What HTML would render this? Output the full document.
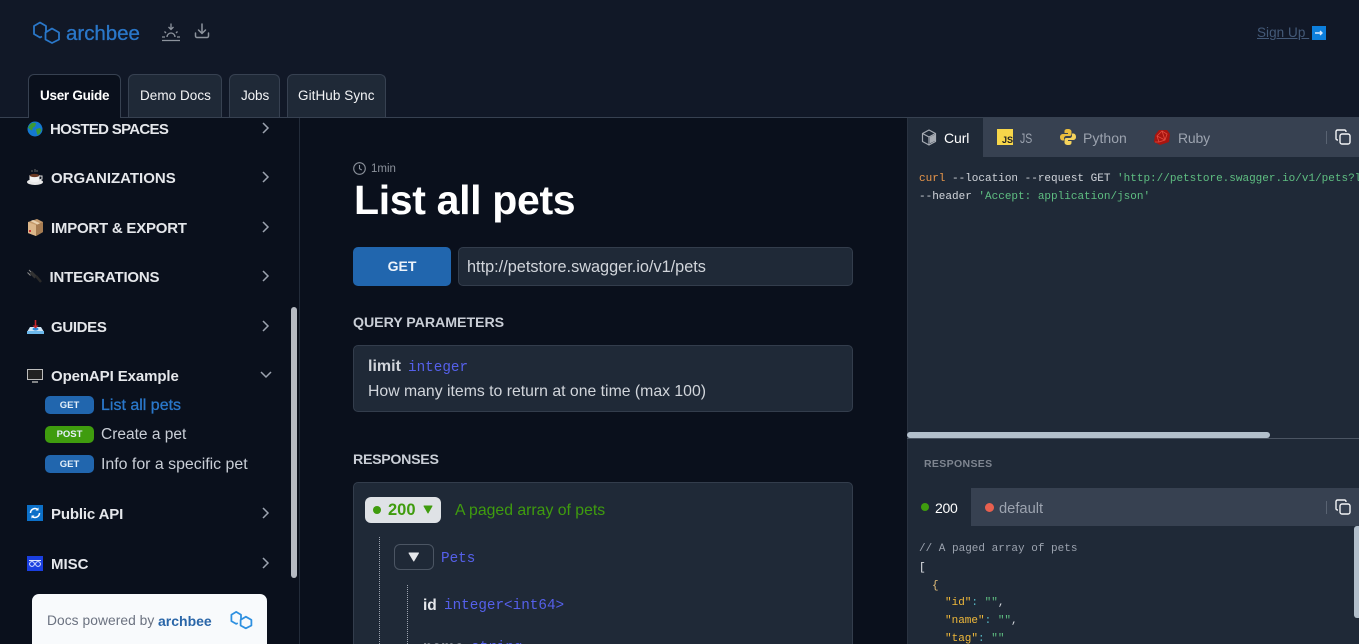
<!DOCTYPE html>
<html><head><meta charset="utf-8"><title>List all pets</title>
<style>
html,body{margin:0;padding:0;width:1359px;height:644px;overflow:hidden;background:#0a101c;font-family:"Liberation Sans",sans-serif}
#r{position:relative;width:1359px;height:644px;overflow:hidden}
.b{position:absolute;box-sizing:border-box}
.t{position:absolute;white-space:pre;line-height:20px}
.m{font-family:"Liberation Mono",monospace}
svg{position:absolute;overflow:visible}
.nav{font-size:15px;font-weight:bold;color:#e5e7eb}
.tab{position:absolute;top:74px;height:44px;box-sizing:border-box;background:#1f2937;border:1px solid #374151;border-bottom:none;border-radius:6px 6px 0 0}
.tt{font-size:13.5px;color:#f3f4f6;top:86px}
.pill{position:absolute;left:45px;width:49px;height:18px;border-radius:5px;background:#2166ae;color:#e5f0fa;font-size:9.5px;font-weight:bold;text-align:center;line-height:19px}
.c{font-size:11px;line-height:18px;color:#d1d5db}
</style></head><body><div id="r">
<div class="b" style="left:0;top:0;width:1359px;height:118px;background:#111827"></div>

<svg style="left:30px;top:18px" width="32" height="28" viewBox="30 18 32 28" fill="none" stroke="#2a77c9" stroke-width="1.800" stroke-linejoin="round"><path d="M42 36.500L40 37.500L34 34V26L40 22.500L46 26V32"/><path d="M52 28.500L59 32.500V39.500L52 43L45.500 39.500V32.500Z"/></svg>
<div class="t" style="left:66px;top:24px;font-size:20.500px;color:#2a77c9;letter-spacing:-.02px;-webkit-text-stroke:.3px #2a77c9">archbee</div>
<svg style="left:161px;top:22px" width="20" height="20" viewBox="0 0 20 20" fill="none" stroke="#8d939d" stroke-width="1.300"><path d="M10 1.500v6M7.500 5l2.500 2.500L12.500 5M1 18.500h18M1 15h3M16 15h3M6 15a4 4 0 0 1 8 0M3.500 9.500l1.500 1.500M16.500 9.500L15 11"/></svg>
<svg style="left:194px;top:23px" width="16" height="16" viewBox="0 0 16 16" fill="none" stroke="#8d939d" stroke-width="1.500" stroke-linecap="round" stroke-linejoin="round"><path d="M8 1v9M4.500 7L8 10.500 11.500 7M1.500 10v3a1.500 1.500 0 0 0 1.500 1.500h10a1.500 1.500 0 0 0 1.500-1.500v-3"/></svg>

<div class="t" style="left:1257px;top:23px;font-size:13.500px;color:#445a78;text-decoration:underline;letter-spacing:.05px">Sign Up </div>
<div class="b" style="left:1312px;top:26px;width:14px;height:14px;background:#0d7fdc;border:0"></div>
<svg style="left:1314px;top:29px" width="10" height="8"><path d="M1 4h7M6 2l2 2-2 2" stroke="#dbeafe" stroke-width="1.400" fill="none"/></svg>

<div class="tab" style="left:28px;width:93px;background:#0a101c"></div>
<div class="tab" style="left:128px;width:94px"></div>
<div class="tab" style="left:229px;width:51px"></div>
<div class="tab" style="left:287px;width:99px"></div>
<div class="t tt" style="left:40px;font-weight:bold;color:#fff;letter-spacing:-.28px">User Guide</div>
<div class="t tt" style="left:140px;letter-spacing:.05px">Demo Docs</div>
<div class="t tt" style="left:241px;letter-spacing:-.1px">Jobs</div>
<div class="t tt" style="left:298px;letter-spacing:.07px">GitHub Sync</div>
<div class="b" style="left:0;top:117px;width:28px;height:1px;background:#374151"></div>
<div class="b" style="left:120px;top:117px;width:1239px;height:1px;background:#374151"></div>

<div class="b" style="left:299px;top:118px;width:1px;height:526px;background:#232c3a"></div>

<svg style="left:27px;top:121px" width="16" height="16" viewBox="0 0 16 16"><circle cx="8" cy="8" r="7.500" fill="#1478d0"/><path d="M4 2.500c2-1 4-1 5 0l-1 3-2 1-1 3-2-1-2-2zM9 8l4-1 1.500 2-2 4-2 1-1-3z" fill="#3d9a34"/></svg>
<div class="t nav" style="left:50px;top:120px;letter-spacing:-.7px">HOSTED SPACES</div>

<svg style="left:27px;top:169px" width="16" height="16" viewBox="0 0 16 16"><ellipse cx="8" cy="13" rx="8" ry="3" fill="#e8e8e8"/><path d="M2.500 6h10v4c0 2-2 3-5 3s-5-1-5-3z" fill="#f2f2f2"/><ellipse cx="7.500" cy="6.500" rx="4.800" ry="1.600" fill="#6b3a24"/><path d="M12.500 7h2.500v3l-3 1" fill="none" stroke="#ddd"/><path d="M5 3V1M8 3V0M10 3V1" stroke="#666"/></svg>
<div class="t nav" style="left:51px;top:169px">ORGANIZATIONS</div>

<svg style="left:27px;top:219px" width="17" height="17" viewBox="0 0 17 17"><path d="M1 3l9-3 6 3v10l-7 4-8-3z" fill="#c49a6c"/><path d="M1 3l8 3v11l-8-3z" fill="#dcb78a"/><path d="M9 6l7-3v10l-7 4z" fill="#a67c52"/><path d="M3.500 2l7 3.500 2.500-1.200-7-3.300z" fill="#e9d2b0"/><rect x="2" y="11" width="2" height="2" fill="#c33"/></svg>
<div class="t nav" style="left:51px;top:219px;letter-spacing:-.23px">IMPORT &amp; EXPORT</div>

<svg style="left:27px;top:269px" width="16" height="15" viewBox="0 0 16 15"><path d="M2 1l3 3M.5 3.500l3 3" stroke="#888" stroke-width="1"/><path d="M5 2l5 5-2.500 2.500-5-5z" fill="#333"/><path d="M9 7l5 6" stroke="#2a2a2a" stroke-width="2.500"/></svg>
<div class="t nav" style="left:49.500px;top:268px;letter-spacing:-.2px">INTEGRATIONS</div>

<svg style="left:27px;top:319px" width="17" height="15" viewBox="0 0 17 15"><path d="M3 8h11l3 5v2H0v-2z" fill="#cfe6f7"/><path d="M0 12h17v3H0z" fill="#6db9ec"/><ellipse cx="8.500" cy="10" rx="3" ry="1.500" fill="#2b87d8"/><path d="M8.500 1v7" stroke="#c6252b" stroke-width="1.600"/><path d="M5.500 6.500h6l-3 3z" fill="#c6252b"/></svg>
<div class="t nav" style="left:51px;top:318px;letter-spacing:-.33px">GUIDES</div>

<svg style="left:27px;top:369px" width="16" height="14" viewBox="0 0 16 14"><rect x=".5" y=".5" width="15" height="10" fill="#222" stroke="#bdbdbd"/><path d="M5 13h6" stroke="#aaa" stroke-width="1.500"/></svg>
<div class="t nav" style="left:51px;top:367px;letter-spacing:-.1px">OpenAPI Example</div>

<div class="pill" style="top:396px">GET</div>
<div class="t" style="left:101px;top:396px;font-size:16px;color:#2a77c9;-webkit-text-stroke:.3px #2a77c9">List all pets</div>
<div class="pill" style="top:426px;height:17px;background:#3f9c0e;line-height:17px">POST</div>
<div class="t" style="left:101px;top:425px;font-size:15.500px;color:#c9ced6">Create a pet</div>
<div class="pill" style="top:455px">GET</div>
<div class="t" style="left:101px;top:455px;font-size:15.900px;color:#c9ced6">Info for a specific pet</div>

<svg style="left:27px;top:505px" width="16" height="16" viewBox="0 0 16 16"><rect width="16" height="16" fill="#0c70c8"/><path d="M3.500 8a4.500 4.500 0 0 1 7.500-3.300M12.500 8a4.500 4.500 0 0 1-7.500 3.300" fill="none" stroke="#fff" stroke-width="1.500"/><path d="M11.500 2.500v3h-3zM4.500 13.500v-3h3z" fill="#fff"/></svg>
<div class="t nav" style="left:51px;top:505px;letter-spacing:-.15px">Public API</div>
<svg style="left:27px;top:556px" width="16" height="15" viewBox="0 0 16 15"><rect width="16" height="15" fill="#1a3fe0"/><path d="M2 4.500h12" stroke="#dfe6ff" stroke-width="1"/><circle cx="5" cy="8" r="2.400" fill="none" stroke="#dfe6ff"/><circle cx="11" cy="8" r="2.400" fill="none" stroke="#dfe6ff"/></svg>
<div class="t nav" style="left:51px;top:555px">MISC</div>

<svg style="left:260px;top:121px" width="12" height="460" fill="none" stroke="#9ca3af" stroke-width="1.500" stroke-linejoin="miter"><path d="M3 2l5 5-5 5M3 51l5 5-5 5M3 101l5 5-5 5M3 150l5 5-5 5M3 200l5 5-5 5M1 251l5 5 5-5M3 387l5 5-5 5M3 437l5 5-5 5"/></svg>
<div class="b" style="left:291px;top:307px;width:6px;height:271px;background:#b5bac2;border-radius:3px"></div>

<div class="b" style="left:32px;top:594px;width:235px;height:50px;background:#f8fafc;border-radius:7px 7px 0 0"></div>
<div class="t" style="left:47px;top:611px;font-size:13.800px;color:#6b7280;letter-spacing:.05px">Docs powered by</div>
<div class="t" style="left:158px;top:611px;font-size:14px;font-weight:bold;color:#2a66a8">archbee</div>
<svg style="left:229px;top:609px" width="24" height="21" viewBox="31 19 30 26" fill="none" stroke="#2e90e0" stroke-width="2.200" stroke-linejoin="round"><path d="M42 36.500L40 37.500L34 34V26L40 22.500L46 26V32"/><path d="M52 28.500L59 32.500V39.500L52 43L45.500 39.500V32.500Z"/></svg>

<svg style="left:353px;top:162px" width="13" height="13" viewBox="0 0 13 13" fill="none" stroke="#8b919b" stroke-width="1.100"><circle cx="6.500" cy="6.500" r="5.800"/><path d="M6.500 3v3.700l2.300 1.300"/></svg>
<div class="t" style="left:371px;top:159px;font-size:11.500px;color:#8b919b">1min</div>
<div class="t" style="left:354px;top:178px;font-size:41px;line-height:44px;font-weight:bold;color:#fff;letter-spacing:-.33px">List all pets</div>

<div class="b" style="left:353px;top:247px;width:98px;height:39px;background:#2166ae;border-radius:5px"></div>
<div class="t" style="left:353px;width:98px;text-align:center;top:256px;font-size:14px;font-weight:bold;color:#edf3fa">GET</div>
<div class="b" style="left:458px;top:247px;width:395px;height:39px;background:#1f2937;border:1px solid #333d4c;border-radius:5px"></div>
<div class="t" style="left:467px;top:257px;font-size:16.300px;color:#d1d5db">http://petstore.swagger.io/v1/pets</div>

<div class="t" style="left:353px;top:313px;font-size:14.200px;font-weight:bold;color:#c9ced6;letter-spacing:-.05px">QUERY PARAMETERS</div>
<div class="b" style="left:353px;top:345px;width:500px;height:67px;background:#1f2937;border:1px solid #333d4c;border-radius:5px"></div>
<div class="t" style="left:368px;top:357px;font-size:16px;font-weight:bold;color:#d1d5db">limit</div>
<div class="t m" style="left:408px;top:358px;font-size:14.300px;color:#5560ea">integer</div>
<div class="t" style="left:368px;top:382px;font-size:15.800px;color:#d1d5db">How many items to return at one time (max 100)</div>

<div class="t" style="left:353px;top:450px;font-size:14.200px;font-weight:bold;color:#c9ced6;letter-spacing:-.3px">RESPONSES</div>
<div class="b" style="left:353px;top:482px;width:500px;height:180px;background:#1f2937;border:1px solid #333d4c;border-radius:5px"></div>
<div class="b" style="left:365px;top:497px;width:76px;height:26px;background:#dfe2e6;border-radius:6px"></div>
<div class="b" style="left:373px;top:506px;width:8px;height:8px;background:#3f9c0e;border-radius:50%"></div>
<div class="t" style="left:388px;top:500px;font-size:16.500px;font-weight:bold;color:#3f9c0e">200</div>
<svg style="left:423px;top:505px" width="10" height="9"><path d="M1 1h8l-4 7z" fill="#3f9c0e" stroke="#3f9c0e" stroke-linejoin="round"/></svg>
<div class="t" style="left:455px;top:501px;font-size:15.800px;color:#3f9c0e">A paged array of pets</div>

<div class="b" style="left:379px;top:537px;width:0;height:107px;border-left:1px dotted #9ca3af"></div>
<div class="b" style="left:394px;top:544px;width:40px;height:26px;background:#1f2937;border:1px solid #4b5563;border-radius:6px"></div>
<svg style="left:408px;top:552px" width="12" height="10"><path d="M1 1h9.500l-4.750 8z" fill="#e5e7eb" stroke="#e5e7eb" stroke-linejoin="round"/></svg>
<div class="t m" style="left:441px;top:549px;font-size:14.300px;color:#5560ea">Pets</div>
<div class="b" style="left:407px;top:585px;width:0;height:59px;border-left:1px dotted #9ca3af"></div>
<div class="t" style="left:423px;top:596px;font-size:15.500px;font-weight:bold;color:#e5e7eb">id</div>
<div class="t m" style="left:444px;top:596px;font-size:14.300px;color:#5560ea">integer&lt;int64&gt;</div>
<div class="t" style="left:423px;top:638px;font-size:15.500px;font-weight:bold;color:#e5e7eb">name</div>
<div class="t m" style="left:471px;top:638px;font-size:14.300px;color:#5560ea">string</div>

<div class="b" style="left:907px;top:118px;width:452px;height:526px;background:#1f2937"></div>
<div class="b" style="left:907px;top:118px;width:1px;height:526px;background:#2a3341"></div>
<div class="b" style="left:983px;top:118px;width:376px;height:39px;background:#374151"></div>

<svg style="left:921px;top:129px" width="16" height="17" viewBox="0 0 16 17" fill="none" stroke="#a6abb3" stroke-width="1.200" stroke-linejoin="round"><path d="M8 1l6.500 3.500v8L8 16l-6.500-3.500v-8zM1.500 4.500L8 8l6.500-3.500M8 8v8"/><path d="M9.500 8.500l4-2v5l-4 2z" fill="#a6abb3"/></svg>
<div class="t" style="left:944px;top:128px;font-size:14px;color:#fff;letter-spacing:-.1px">Curl</div>
<div class="b" style="left:997px;top:129px;width:16px;height:16px;background:#f7d64a"></div>
<div class="t" style="left:1002px;top:135px;font-size:9px;line-height:10px;font-weight:bold;color:#222">JS</div>
<div class="t" style="left:1020px;top:128px;font-size:14px;color:#9ca3af;transform:scaleX(.75);transform-origin:0 0">JS</div>
<svg style="left:1060px;top:129px" width="16" height="16" viewBox="0 0 16 16"><path d="M8 0c-3 0-3.500 1-3.500 2.500V4H8v1H3C1.500 5 0 6 0 8c0 2.500 1.500 3.500 2.500 3.500H4V9.500C4 8 5 7 6.500 7h3C11 7 11.500 6 11.500 5V2.500C11.500 1 10 0 8 0z" fill="#e9bd3e"/><path d="M8 16c3 0 3.500-1 3.500-2.500V12H8v-1h5c1.500 0 3-1 3-3 0-2.500-1.500-3.500-2.500-3.500H12v2C12 8 11 9 9.500 9h-3C5 9 4.500 10 4.500 11v2.500C4.500 15 6 16 8 16z" fill="#f5d35c"/></svg>
<div class="t" style="left:1083px;top:128px;font-size:14px;color:#9ca3af;letter-spacing:.05px">Python</div>
<svg style="left:1154px;top:130px" width="16" height="15" viewBox="0 0 16 15"><path d="M5 0h8l3 4-1 8-9 3-6-3 1-7z" fill="#a8150f"/><path d="M3 6l5-5 5 3-2 6-6 2zM8 1l3 9M3 6l8 4M1 12l4 0" stroke="#e04a3f" stroke-width=".8" fill="none"/></svg>
<div class="t" style="left:1178px;top:128px;font-size:14px;color:#9ca3af;letter-spacing:-.2px">Ruby</div>

<div class="b" style="left:1326px;top:131px;width:1px;height:13px;background:#596372"></div>
<svg style="left:1335px;top:129px" width="16" height="16" viewBox="0 0 16 16" fill="none" stroke="#f3f4f6" stroke-width="1.400" stroke-linejoin="round"><rect x="5" y="5" width="10" height="10" rx="2"/><path d="M11 3V2.500A1.500 1.500 0 0 0 9.500 1h-7A1.500 1.500 0 0 0 1 2.500v7A1.500 1.500 0 0 0 2.500 11H3"/></svg>

<div class="t m c" style="left:919px;top:170px"><span style="color:#e8964a">curl</span> --location --request GET <span style="color:#5fbf82">'http://petstore.swagger.io/v1/pets?limit=10'</span></div>
<div class="t m c" style="left:919px;top:188px">--header <span style="color:#5fbf82">'Accept: application/json'</span></div>

<div class="b" style="left:907px;top:438px;width:452px;height:1px;background:#4b5563"></div>
<div class="b" style="left:907px;top:432px;width:363px;height:6px;background:#b3c0cc;border-radius:3px"></div>

<div class="t" style="left:924px;top:454px;font-size:10.500px;font-weight:bold;color:#7e8590;letter-spacing:.35px">RESPONSES</div>
<div class="b" style="left:971px;top:488px;width:388px;height:38px;background:#374151"></div>
<div class="b" style="left:921px;top:503px;width:8px;height:8px;background:#3f9c0e;border-radius:50%"></div>
<div class="t" style="left:935px;top:498px;font-size:14px;color:#fff;letter-spacing:-.3px">200</div>
<div class="b" style="left:985px;top:503px;width:9px;height:9px;background:#e8604f;border-radius:50%"></div>
<div class="t" style="left:999px;top:499px;font-size:14.700px;color:#9ca3af">default</div>
<div class="b" style="left:1326px;top:501px;width:1px;height:13px;background:#596372"></div>
<svg style="left:1335px;top:499px" width="16" height="16" viewBox="0 0 16 16" fill="none" stroke="#f3f4f6" stroke-width="1.400" stroke-linejoin="round"><rect x="5" y="5" width="10" height="10" rx="2"/><path d="M11 3V2.500A1.500 1.500 0 0 0 9.500 1h-7A1.500 1.500 0 0 0 1 2.500v7A1.500 1.500 0 0 0 2.500 11H3"/></svg>
<div class="b" style="left:1354px;top:526px;width:5px;height:92px;background:#b3c0cc;border-radius:3px 0 0 3px"></div>

<div class="t m c" style="left:919px;top:540px;color:#9ca3af">// A paged array of pets</div>
<div class="t m c" style="left:919px;top:559px;color:#e5e7eb">[</div>
<div class="t m c" style="left:932px;top:577px;color:#e5c07b">{</div>
<div class="t m c" style="left:945px;top:594px"><span style="color:#f0b93a">"id"</span><span style="color:#56b6c2">:</span> <span style="color:#5fbf82">""</span>,</div>
<div class="t m c" style="left:945px;top:612px"><span style="color:#f0b93a">"name"</span><span style="color:#56b6c2">:</span> <span style="color:#5fbf82">""</span>,</div>
<div class="t m c" style="left:945px;top:630px"><span style="color:#f0b93a">"tag"</span><span style="color:#56b6c2">:</span> <span style="color:#5fbf82">""</span></div>
</div></body></html>
